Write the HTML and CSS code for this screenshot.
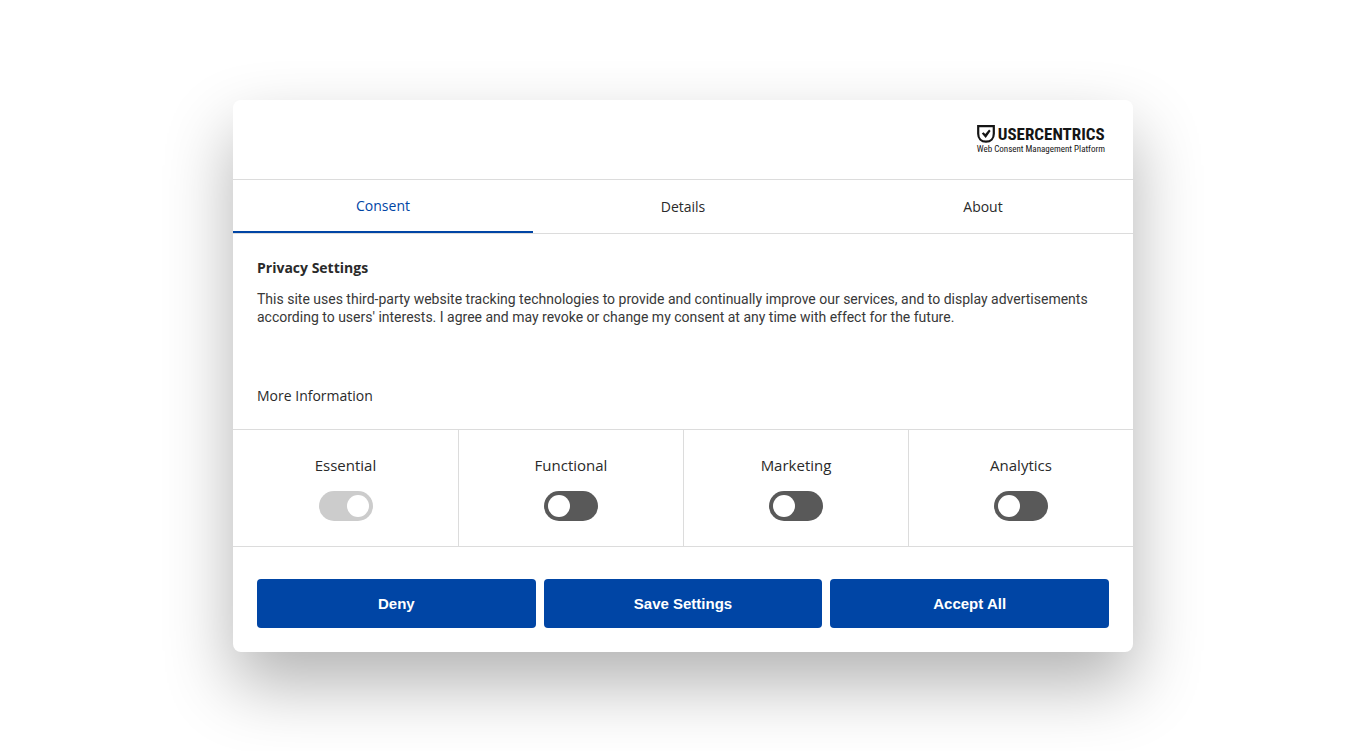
FILE: index.html
```html
<!DOCTYPE html>
<html lang="en">
    <head>
        <meta charset="utf-8">
        <meta name="viewport" content="width=device-width, initial-scale=1">
        <title>Privacy Settings</title>
        <link rel="stylesheet" href="styles.css">
    </head>
    <body>
        <div class="dialog" role="dialog" aria-labelledby="heading">
            <header class="header">
                <a class="logo" href="#">
                    <span class="brand">
                        <svg class="shield" viewBox="0 0 18 18" aria-hidden="true">
                            <path d="M1.2 1.2h15.6v7.5c0 4.6-3 8-7.8 8s-7.8-3.4-7.8-8z" fill="none" stroke="#151515" stroke-width="2.2"/>
                            <path d="M4.8 8.4l1.7-1.2 1.8 1.8 3.8-4.4 1.5 1.3-4.9 7z" fill="#151515"/>
                        </svg>
                        <span class="brand-name">USERCENTRICS</span>
                    </span>
                    <span class="tagline">Web Consent Management Platform</span>
                </a>
            </header>
            <nav class="tabs" role="tablist">
                <button class="tab active" role="tab" aria-selected="true">Consent</button>
                <button class="tab" role="tab" aria-selected="false">Details</button>
                <button class="tab" role="tab" aria-selected="false">About</button>
            </nav>
            <main class="content">
                <h2 class="heading" id="heading">Privacy Settings</h2>
                <p class="text">This site uses third-party website tracking technologies to provide and continually improve our services, and to display advertisements according to users' interests. I agree and may revoke or change my consent at any time with effect for the future.</p>
                <a class="more" href="#">More Information</a>
            </main>
            <div class="categories">
                <div class="category">
                    <label for="essential">Essential</label>
                    <input class="switch" type="checkbox" id="essential" checked disabled>
                </div>
                <div class="category">
                    <label for="functional">Functional</label>
                    <input class="switch" type="checkbox" id="functional">
                </div>
                <div class="category">
                    <label for="marketing">Marketing</label>
                    <input class="switch" type="checkbox" id="marketing">
                </div>
                <div class="category">
                    <label for="analytics">Analytics</label>
                    <input class="switch" type="checkbox" id="analytics">
                </div>
            </div>
            <footer class="actions">
                <button class="btn">Deny</button>
                <button class="btn">Save Settings</button>
                <button class="btn">Accept All</button>
            </footer>
        </div>
    </body>
</html>
```
FILE: styles.css
```css
*{
    box-sizing: border-box;
}
body{
    margin: 0;
    min-height: 100vh;
    display: flex;
    justify-content: center;
    align-items: center;
    background-color: white;
    color: #2a2a2a;
    font-family: "Segoe UI", "Open Sans", sans-serif;
    font-size: 14px;
    line-height: 18px;
}
button{
    font-family: inherit;
    font-size: inherit;
    line-height: inherit;
    cursor: pointer;
}
.dialog{
    width: 100%;
    max-width: 900px;
    background-color: white;
    border-radius: 8px;
    box-shadow: 0 32px 68px rgba(0, 0, 0, 0.3);
}
.header{
    display: flex;
    justify-content: flex-end;
    padding: 24px 28px;
    border-bottom: 1px solid #dcdcdc;
}
.logo{
    display: flex;
    flex-direction: column;
    color: #151515;
    text-decoration: none;
}
.brand{
    display: flex;
    align-items: center;
    gap: 3px;
    height: 20px;
}
.shield{
    width: 18px;
    height: 18px;
}
.brand-name{
    font-family: "Liberation Sans Narrow", "Roboto Condensed", Roboto, sans-serif;
    font-size: 17px;
    font-weight: bold;
}
.tagline{
    font-family: "Roboto Condensed", Roboto, sans-serif;
    font-size: 9px;
    line-height: 11px;
}
.tabs{
    display: grid;
    grid-template-columns: repeat(3, 1fr);
    border-bottom: 1px solid #dcdcdc;
}
.tab{
    height: 53px;
    padding: 2px 0 0;
    border: none;
    background: none;
    color: #2a2a2a;
    font-weight: 500;
}
.tab.active{
    color: #0045a5;
    border-bottom: 2px solid #0045a5;
}
.content{
    padding: 24px;
}
.heading{
    margin: 0 0 12px;
    font-size: 14px;
    font-weight: bold;
    line-height: 20px;
}
.text{
    margin: 0 0 61px;
    color: #383838;
    font-family: "Segoe UI", Roboto, sans-serif;
}
.more{
    display: block;
    color: #2a2a2a;
    font-weight: 500;
    text-decoration: none;
}
.categories{
    display: grid;
    grid-template-columns: repeat(4, 1fr);
    border-top: 1px solid #dcdcdc;
    border-bottom: 1px solid #dcdcdc;
}
.category{
    display: flex;
    flex-direction: column;
    align-items: center;
    gap: 17px;
    padding: 26px 0 25px;
    border-left: 1px solid #dcdcdc;
    font-size: 15px;
    font-weight: 500;
}
.category:first-child{
    border-left: none;
}
.switch{
    appearance: none;
    width: 54px;
    height: 30px;
    margin: 0;
    padding: 4px;
    border-radius: 15px;
    background-color: #595959;
    cursor: pointer;
}
.switch::before{
    content: "";
    display: block;
    width: 22px;
    height: 22px;
    border-radius: 50%;
    background-color: white;
}
.switch:checked{
    background-color: #0045a5;
}
.switch:checked::before{
    margin-left: auto;
}
.switch:disabled{
    background-color: #cccccc;
    cursor: default;
}
.actions{
    display: grid;
    grid-template-columns: repeat(3, 1fr);
    gap: 8px;
    padding: 32px 24px 24px;
}
.btn{
    height: 49px;
    padding: 2px 0 0;
    border: none;
    border-radius: 4px;
    background-color: #0045a5;
    color: white;
    font-family: "Liberation Sans", Arial, sans-serif;
    font-size: 15px;
    font-weight: bold;
}
```
